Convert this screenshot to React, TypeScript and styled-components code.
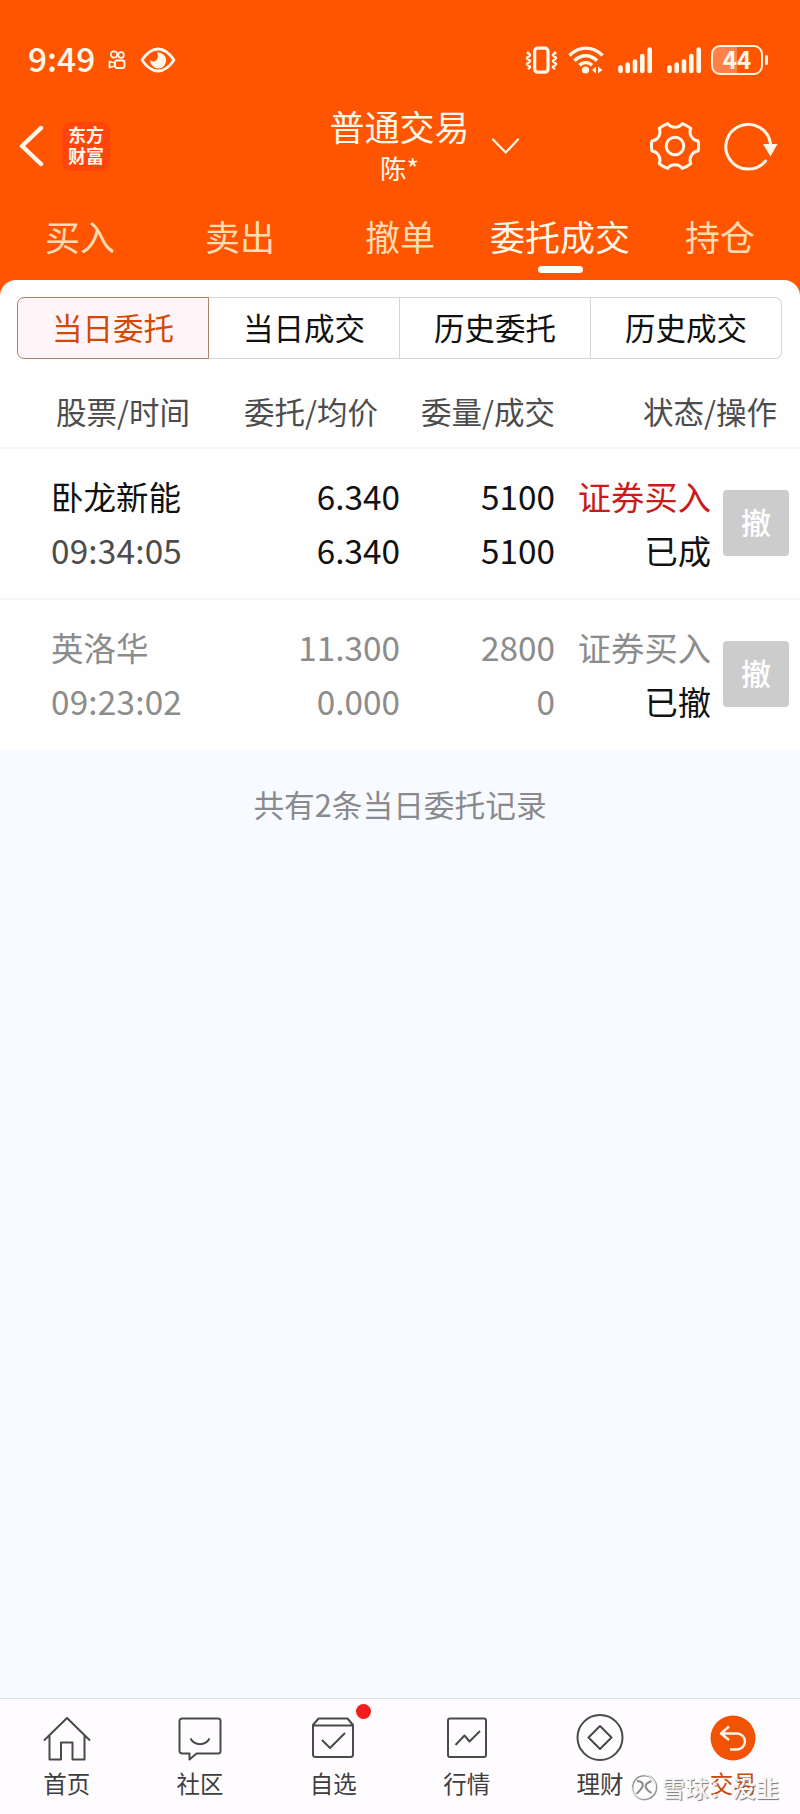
import React from "react";
import styled, { createGlobalStyle } from "styled-components";

const GlobalStyle = createGlobalStyle`
  * { box-sizing: border-box; }
  body {
    margin: 0;
    background: #f7fbff;
    font-family: "Noto Sans CJK SC", sans-serif;
    color: #111;
  }
`;

const Screen = styled.div`
  width: 800px;
  height: 1814px;
  display: flex;
  flex-direction: column;
  overflow: hidden;
  background: #f7fbff;
`;

const Header = styled.header`
  height: 296px;
  flex: none;
  background: #ff5500;
  color: #fff8ea;
`;

const StatusBar = styled.div`
  height: 102px;
  padding: 17px 32px 0 28px;
  display: flex;
  align-items: center;
  justify-content: space-between;
`;

const StatusGroup = styled.div`
  display: flex;
  align-items: center;
`;

const Clock = styled.span`
  font-size: 33.5px;
  font-weight: 500;
  line-height: 40px;
  width: 80px;
  margin-top: -3px;
`;

const TitleBar = styled.div`
  height: 88px;
  display: grid;
  grid-template-columns: 320px 159px 321px;
  align-items: center;
`;

const TitleLeft = styled.div`
  display: flex;
  align-items: center;
  padding-left: 18px;
  gap: 17px;
`;

const TitleRight = styled.div`
  display: flex;
  align-items: center;
  padding: 0 22px 0 12px;
`;

const ToolIcons = styled.div`
  display: flex;
  gap: 24px;
  margin-left: auto;
`;

const Logo = styled.div`
  width: 48px;
  height: 49px;
  padding-top: 2px;
  border-radius: 9px;
  background: #ff4509;
  text-align: center;
  font-size: 18px;
  font-weight: 700;
  line-height: 21px;
`;

const TitleText = styled.div`
  text-align: center;
  margin-top: -3px;
`;

const Title = styled.div`
  font-size: 35px;
  line-height: 45px;
  white-space: nowrap;
`;

const Subtitle = styled.div`
  font-size: 26.5px;
  line-height: 39px;
`;

const Tabs = styled.nav`
  height: 87px;
  display: grid;
  grid-template-columns: repeat(5, 1fr);
`;

const Tab = styled.div<{ $active?: boolean }>`
  display: flex;
  flex-direction: column;
  align-items: center;
  padding-top: 22px;
  font-size: 35px;
  line-height: 48px;
  white-space: nowrap;
  color: ${(p) => (p.$active ? "#fff8ea" : "#ffdcb4")};
  &::after {
    content: "";
    width: 45px;
    height: 7px;
    margin-top: 6px;
    border-radius: 4px;
    background: ${(p) => (p.$active ? "#fff" : "transparent")};
  }
`;

const Panel = styled.main`
  flex: none;
  height: 470px;
  margin-top: -16px;
  border-radius: 16px 16px 0 0;
  background: #fefefe;
  padding-top: 17px;
`;

const Segments = styled.div`
  display: flex;
  height: 62px;
  margin: 0 18px 0 17px;
`;

const Segment = styled.div<{ $active?: boolean }>`
  flex: 1;
  display: flex;
  align-items: center;
  justify-content: center;
  padding-bottom: 2px;
  font-size: 30.5px;
  line-height: 40px;
  color: ${(p) => (p.$active ? "#cf4a05" : "#111")};
  background: ${(p) => (p.$active ? "#fff5f8" : "#fff")};
  border: 1px solid ${(p) => (p.$active ? "#a98467" : "#d6d6d6")};
  &:not(:first-child) { border-left: 0; }
  &:first-child { border-radius: 7px 0 0 7px; }
  &:last-child { border-radius: 0 7px 7px 0; }
`;

const HeadRow = styled.div`
  height: 88px;
  display: grid;
  grid-template-columns: 190px 188px 177px 222px;
  align-items: center;
  padding-top: 15px;
  text-align: right;
  font-size: 30.5px;
  line-height: 44px;
  color: #4c4c4c;
  white-space: nowrap;
`;

const Order = styled.div<{ $muted?: boolean }>`
  height: 151px;
  border-top: 2px solid #f5f5f5;
  display: grid;
  grid-template-columns: 222px 178px 155px 156px 66px;
  padding-top: 20px;
  font-size: 33.3px;
  line-height: 54px;
  white-space: nowrap;
  color: ${(p) => (p.$muted ? "#8c8c8c" : "#111")};
`;

const Cell = styled.div<{ $left?: boolean }>`
  display: flex;
  flex-direction: column;
  text-align: ${(p) => (p.$left ? "left" : "right")};
  padding-left: ${(p) => (p.$left ? "51px" : "0")};
`;

const Name = styled.span`
  font-size: 32.5px;
`;

const Time = styled.span<{ $muted?: boolean }>`
  color: ${(p) => (p.$muted ? "#8c8c8c" : "#4c4c4c")};
  letter-spacing: 0.2px;
`;

const Side = styled.span<{ $muted?: boolean }>`
  color: ${(p) => (p.$muted ? "#8c8c8c" : "#cb1a1a")};
`;

const State = styled.span`
  color: #111;
`;

const CancelButton = styled.button`
  width: 66px;
  height: 66px;
  margin: 21px 0 0 12px;
  padding: 0;
  border: 0;
  border-radius: 4px;
  background: #ccc;
  color: #fff;
  font-family: inherit;
  font-size: 30px;
  font-weight: 500;
  line-height: 62px;
  padding-bottom: 4px;
`;

const Summary = styled.p`
  flex: 1;
  margin: 0;
  padding-top: 32px;
  text-align: center;
  font-size: 30.7px;
  line-height: 44px;
  color: #8a8a8e;
`;

const BottomNav = styled.nav`
  position: relative;
  flex: none;
  height: 116px;
  border-top: 1px solid #dfe3e8;
  background: #fefcfe;
  display: grid;
  grid-template-columns: repeat(6, 1fr);
`;

const NavItem = styled.div<{ $active?: boolean }>`
  display: flex;
  flex-direction: column;
  align-items: center;
  padding-top: 14px;
  font-size: 23.5px;
  line-height: 30px;
  gap: 5px;
  color: ${(p) => (p.$active ? "#c9480a" : "#3e3e3e")};
`;

const IconWrap = styled.div`
  position: relative;
  width: 50px;
  height: 50px;
`;

const Dot = styled.i`
  position: absolute;
  left: 48px;
  top: -9px;
  width: 15px;
  height: 15px;
  border-radius: 50%;
  background: #f41c1c;
`;

const Watermark = styled.div`
  position: absolute;
  left: 630px;
  top: 72px;
  display: flex;
  align-items: center;
  gap: 4px;
  font-size: 23px;
  font-weight: 500;
  line-height: 32px;
  letter-spacing: 0.5px;
  white-space: nowrap;
  color: #f6f5f6;
  text-shadow: 1px 1px 1px #777;
`;

const KuaishouIcon = () => (
  <svg width="18" height="20" viewBox="0 0 18 20" fill="none" stroke="currentColor" strokeWidth="1.8">
    <circle cx="6" cy="4.5" r="3.2" />
    <circle cx="13" cy="5" r="2.8" />
    <rect x="7" y="10.5" width="9.5" height="7.5" rx="2" />
    <path d="M7 13 1.5 11.5v6L7 16" strokeLinejoin="round" />
  </svg>
);

const Eye = styled.svg`
  margin-left: 14px;
`;

const EyeIcon = () => (
  <Eye width="36" height="26" viewBox="0 0 36 26">
    <path d="M2 13C7 5.500 12 2 18 2s11 3.500 16 11c-5 7.500-10 11-16 11S7 20.500 2 13Z" fill="none" stroke="currentColor" strokeWidth="2.8" strokeLinejoin="round" />
    <path d="M17 5.500a8 8 0 1 1-6.800 7.200c1.500 1.900 4 2.300 5.800.8 2.200-1.800 2.600-5 1-8Z" fill="currentColor" />
  </Eye>
);

const VibrateIcon = () => (
  <svg width="33" height="28" viewBox="0 0 33 28" fill="none" stroke="currentColor">
    <rect x="9.700" y="2.200" width="13.300" height="24" rx="3" strokeWidth="3.200" />
    <path d="m2 6 3 3-3 3 3 3-3 3 3 3-2 2M31 6l-3 3 3 3-3 3 3 3-3 3 2 2" strokeWidth="2.600" strokeLinejoin="round" />
  </svg>
);

const Wifi = styled.svg`
  margin-left: 10px;
`;

const WifiIcon = () => (
  <Wifi width="36" height="28" viewBox="0 0 36 28" fill="none" stroke="currentColor" strokeWidth="3.400">
    <path d="M1.500 9.500C11-.4 25-.4 34.500 9.500M6.500 14.700c6.500-6.700 16-6.700 22.500 0M11.500 19.300c3.500-3.600 9-3.600 12.500 0" />
    <circle cx="17.500" cy="24" r="3.600" fill="currentColor" stroke="none" />
    <path d="M28 20.500v7l-4-3.500ZM30 20.500v7l4.500-3.500Z" fill="currentColor" stroke="none" />
  </Wifi>
);

const Signal = styled.svg`
  margin-left: 14px;
`;

const SignalIcon = () => (
  <Signal width="35" height="28" viewBox="0 0 35 28" stroke="currentColor" strokeWidth="4.600" strokeLinecap="round">
    <path d="M2.500 21.500v3.500M9.700 18.500v6.500M17 15.500v9.500M24.300 10v15M31.700 3.500v21.500" />
  </Signal>
);

const Battery = styled.div`
  width: 52px;
  height: 30px;
  margin-left: 9px;
  border: 2px solid #fff2de;
  border-radius: 9px;
  background: linear-gradient(90deg, #ff8048 0 50%, transparent 50%);
  text-align: center;
  font-size: 24px;
  font-weight: 700;
  line-height: 24px;
`;

const BatteryTip = styled.i`
  width: 3px;
  height: 10px;
  margin-left: 2px;
  border-radius: 2px;
  background: #fff2de;
`;

const BackIcon = () => (
  <svg width="27" height="42" viewBox="0 0 27 42" fill="none" stroke="currentColor" strokeWidth="4.400" strokeLinecap="round" strokeLinejoin="round">
    <path d="M23 3 4 21l19 18" />
  </svg>
);

const ChevronIcon = () => (
  <svg width="29" height="17" viewBox="0 0 29 17" fill="none" stroke="currentColor" strokeWidth="2.200" strokeLinecap="round">
    <path d="m2 1.500 12.700 13L27 1.500" />
  </svg>
);

const polar = (deg: number, r: number) => {
  const a = (deg * Math.PI) / 180;
  return `${(25 + r * Math.cos(a)).toFixed(2)} ${(25 + r * Math.sin(a)).toFixed(2)}`;
};

const gearPath =
  `M${polar(-12, 23.6)}` +
  [0, 60, 120, 180, 240, 300]
    .map((d) => `Q${polar(d, 24)} ${polar(d + 12, 23.6)}C${polar(d + 18, 18)} ${polar(d + 42, 18)} ${polar(d + 48, 23.6)}`)
    .join("") +
  "Z";

const GearIcon = () => (
  <svg width="50" height="50" viewBox="0 0 50 50" fill="none" stroke="currentColor" strokeWidth="3" strokeLinejoin="round">
    <path d={gearPath} />
    <circle cx="25" cy="25" r="8.800" />
  </svg>
);

const RefreshIcon = () => (
  <svg width="54" height="50" viewBox="0 0 54 50">
    <path d="M41.500 40A22.400 22.400 0 1 1 46.500 23" fill="none" stroke="currentColor" strokeWidth="3" strokeLinecap="round" />
    <path d="M39 23h14.500L46.500 35.500Z" fill="currentColor" />
  </svg>
);

const navIcons: Record<string, React.ReactNode> = {
  home: <path d="M2 27.500 25 5l23 22.500M7.500 22.500V46.500H19v-17h11.500v17H42.500V22.500" />,
  chat: (
    <>
      <path d="M7 5.500h36a2.500 2.500 0 0 1 2.500 2.500v30a2.500 2.500 0 0 1-2.500 2.500H21.500L14.500 46.500v-6H7A2.500 2.500 0 0 1 4.500 38V8A2.500 2.500 0 0 1 7 5.500Z" />
      <path d="M15.500 25.500c4 7.500 15 7.500 19 0" />
    </>
  ),
  check: (
    <>
      <path d="M10.500 5.500h29L45 12v29.500a2.500 2.500 0 0 1-2.500 2.500h-35A2.500 2.500 0 0 1 5 41.500V12ZM5 12.500h40" />
      <path d="m14 27 8 8 15-15" />
    </>
  ),
  chart: (
    <>
      <rect x="6" y="5.500" width="38" height="38.500" rx="2" />
      <path d="m13.500 32 9-9.500 5 6L38 18" />
    </>
  ),
  wealth: (
    <>
      <circle cx="25" cy="24.500" r="22.500" />
      <path d="M25 13 36.500 24.500 25 36 13.500 24.500Z" />
    </>
  ),
  trade: (
    <>
      <circle cx="25" cy="25" r="22.500" fill="#f25303" stroke="none" />
      <path d="M21 13.500 13 20.500l8 6.500M13 20.500h16a8 8 0 0 1 0 16h-7" stroke="#fff5e8" strokeWidth="2.400" />
    </>
  ),
};

const navItems = [
  { icon: "home", label: "首页" },
  { icon: "chat", label: "社区" },
  { icon: "check", label: "自选", dot: true },
  { icon: "chart", label: "行情" },
  { icon: "wealth", label: "理财" },
  { icon: "trade", label: "交易", active: true },
];

const orders = [
  { name: "卧龙新能", time: "09:34:05", price: "6.340", avg: "6.340", qty: "5100", done: "5100", state: "已成", muted: false },
  { name: "英洛华", time: "09:23:02", price: "11.300", avg: "0.000", qty: "2800", done: "0", state: "已撤", muted: true },
];

export default function App() {
  return (
    <Screen>
      <GlobalStyle />
      <Header>
        <StatusBar>
          <StatusGroup>
            <Clock>9:49</Clock>
            <KuaishouIcon />
            <EyeIcon />
          </StatusGroup>
          <StatusGroup>
            <VibrateIcon />
            <WifiIcon />
            <SignalIcon />
            <SignalIcon />
            <Battery>44</Battery>
            <BatteryTip />
          </StatusGroup>
        </StatusBar>
        <TitleBar>
          <TitleLeft>
            <BackIcon />
            <Logo>
              东方
              <br />
              财富
            </Logo>
          </TitleLeft>
          <TitleText>
            <Title>普通交易</Title>
            <Subtitle>陈*</Subtitle>
          </TitleText>
          <TitleRight>
            <ChevronIcon />
            <ToolIcons>
              <GearIcon />
              <RefreshIcon />
            </ToolIcons>
          </TitleRight>
        </TitleBar>
        <Tabs>
          {["买入", "卖出", "撤单", "委托成交", "持仓"].map((t) => (
            <Tab key={t} $active={t === "委托成交"}>{t}</Tab>
          ))}
        </Tabs>
      </Header>
      <Panel>
        <Segments>
          {["当日委托", "当日成交", "历史委托", "历史成交"].map((t, i) => (
            <Segment key={t} $active={i === 0}>{t}</Segment>
          ))}
        </Segments>
        <HeadRow>
          <span>股票/时间</span>
          <span>委托/均价</span>
          <span>委量/成交</span>
          <span>状态/操作</span>
        </HeadRow>
        {orders.map((o) => (
          <Order key={o.name} $muted={o.muted}>
            <Cell $left>
              <Name>{o.name}</Name>
              <Time $muted={o.muted}>{o.time}</Time>
            </Cell>
            <Cell>
              <span>{o.price}</span>
              <span>{o.avg}</span>
            </Cell>
            <Cell>
              <span>{o.qty}</span>
              <span>{o.done}</span>
            </Cell>
            <Cell>
              <Side $muted={o.muted}>证券买入</Side>
              <State>{o.state}</State>
            </Cell>
            <CancelButton>撤</CancelButton>
          </Order>
        ))}
      </Panel>
      <Summary>共有2条当日委托记录</Summary>
      <BottomNav>
        {navItems.map((n) => (
          <NavItem key={n.icon} $active={n.active}>
            <IconWrap>
              <svg width="50" height="50" viewBox="0 0 50 50" fill="none" stroke="#4a4a4a" strokeWidth="2" strokeLinejoin="round">
                {navIcons[n.icon]}
              </svg>
              {n.dot && <Dot />}
            </IconWrap>
            <span>{n.label}</span>
          </NavItem>
        ))}
        <Watermark>
          <svg width="28" height="28" viewBox="0 0 28 28" fill="none">
            <circle cx="14.500" cy="14.500" r="12" stroke="#999" strokeWidth="1.800" />
            <circle cx="13.500" cy="13.500" r="12" stroke="#fff" strokeWidth="1" />
            <path d="M7 8c5 0 7 3 5 6.500S8 19 6.500 21M21.500 8c-5 2-7 4-5.500 7s4 4 5.500 5" stroke="#8a8a8a" strokeWidth="2" />
          </svg>
          <span>雪球：没韭</span>
        </Watermark>
      </BottomNav>
    </Screen>
  );
}
